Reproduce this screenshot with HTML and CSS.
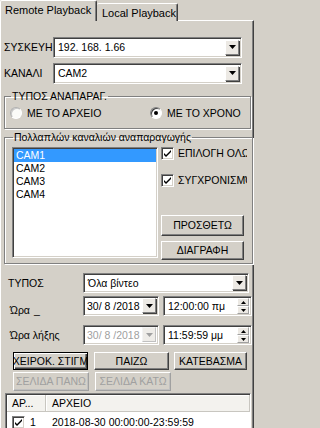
FILE: index.html
```html
<!DOCTYPE html>
<html>
<head>
<meta charset="utf-8">
<link rel="stylesheet" href="styles.css">
</head>
<body>
<div class="tabs">
  <div class="tab tab-active">Remote Playback</div>
  <div class="tab tab-idle">Local Playback</div>
</div>
<div class="panel">
  <div class="field-row">
    <span class="lbl lbl-top">ΣΥΣΚΕΥΗ</span>
    <div class="combo combo-top"><span class="val">192. 168. 1.66</span><span class="drop"><svg width="7" height="4" viewBox="0 0 7 4"><path d="M0 0h7L3.5 4z" fill="#000"/></svg></span></div>
  </div>
  <div class="field-row row-gap">
    <span class="lbl lbl-top">ΚΑΝΑΛΙ</span>
    <div class="combo combo-top"><span class="val">CAM2</span><span class="drop"><svg width="7" height="4" viewBox="0 0 7 4"><path d="M0 0h7L3.5 4z" fill="#000"/></svg></span></div>
  </div>

  <fieldset class="group group-type">
    <legend>ΤΥΠΟΣ ΑΝΑΠΑΡΑΓ.</legend>
    <div class="radio-row">
      <label class="radio radio-a"><span class="rb"></span>ΜΕ ΤΟ ΑΡΧΕΙΟ</label>
      <label class="radio radio-b"><span class="rb rb-on"><span class="dot"></span></span>ΜΕ ΤΟ ΧΡΟΝΟ</label>
    </div>
  </fieldset>

  <fieldset class="group group-multi">
    <legend>Πολλαπλών καναλιών αναπαραγωγής</legend>
    <div class="multi">
      <div class="listbox">
        <div class="item item-sel">CAM1</div>
        <div class="item">CAM2</div>
        <div class="item">CAM3</div>
        <div class="item">CAM4</div>
      </div>
      <div class="side">
        <div class="check check-1"><span class="cb"><svg width="9" height="9" viewBox="0 0 9 9"><path d="M1 4l2 2 5-5v2l-5 5-2-2z" fill="#000"/></svg></span><span class="clip">ΕΠΙΛΟΓΗ ΟΛΩΝ</span></div>
        <div class="check check-2"><span class="cb"><svg width="9" height="9" viewBox="0 0 9 9"><path d="M1 4l2 2 5-5v2l-5 5-2-2z" fill="#000"/></svg></span><span class="clip">ΣΥΓΧΡΟΝΙΣΜΌΣ</span></div>
        <div class="btn btn-side btn-add">ΠΡΟΣΘΕΤΩ</div>
        <div class="btn btn-side btn-del">ΔΙΑΓΡΑΦΗ</div>
      </div>
    </div>
  </fieldset>

  <div class="form">
    <div class="form-row form-type">
      <span class="lbl lbl-form">ΤΥΠΟΣ</span>
      <div class="combo combo-type"><span class="val">Όλα βίντεο</span><span class="drop"><svg width="7" height="4" viewBox="0 0 7 4"><path d="M0 0h7L3.5 4z" fill="#000"/></svg></span></div>
    </div>
    <div class="form-row form-time">
      <span class="lbl lbl-form lbl-start">Ώρα<span class="under">_</span></span>
      <div class="combo date"><span class="val">30/ 8 /2018</span><span class="drop"><svg width="7" height="4" viewBox="0 0 7 4"><path d="M0 0h7L3.5 4z" fill="#000"/></svg></span></div>
      <div class="combo time"><span class="val">12:00:00 πμ</span><span class="spin"><span class="spin-btn"><svg width="5" height="3" viewBox="0 0 5 3"><path d="M0 3h5L2.5 0z" fill="#000"/></svg></span><span class="spin-btn"><svg width="5" height="3" viewBox="0 0 5 3"><path d="M0 0h5L2.5 3z" fill="#000"/></svg></span></span></div>
    </div>
    <div class="form-row form-time form-end">
      <span class="lbl lbl-form lbl-end">Ώρα λήξης</span>
      <div class="combo date date-off"><span class="val">30/ 8 /2018</span><span class="drop"><svg width="7" height="4" viewBox="0 0 7 4"><path d="M0 0h7L3.5 4z" fill="#a0a0a0"/></svg></span></div>
      <div class="combo time"><span class="val">11:59:59 μμ</span><span class="spin"><span class="spin-btn"><svg width="5" height="3" viewBox="0 0 5 3"><path d="M0 3h5L2.5 0z" fill="#000"/></svg></span><span class="spin-btn"><svg width="5" height="3" viewBox="0 0 5 3"><path d="M0 0h5L2.5 3z" fill="#000"/></svg></span></span></div>
    </div>
  </div>

  <div class="btn-row btn-row-1">
    <div class="btn btn-act btn-default"><span class="nowrap">ΧΕΙΡΟΚ. ΣΤΙΓΜ</span></div>
    <div class="btn btn-act">ΠΑΙΖΩ</div>
    <div class="btn btn-act btn-down">ΚΑΤΕΒΑΣΜΑ</div>
  </div>
  <div class="btn-row btn-row-2">
    <div class="btn btn-act btn-off">ΣΕΛΙΔΑ ΠΑΝΩ</div>
    <div class="btn btn-act btn-off">ΣΕΛΙΔΑ ΚΑΤΩ</div>
  </div>

  <div class="listview">
    <div class="lv-head">
      <div class="lv-col lv-col-1">ΑΡ...</div>
      <div class="lv-col lv-col-2">ΑΡΧΕΙΟ</div>
    </div>
    <div class="lv-row">
      <span class="cb cb-lv"><svg width="9" height="9" viewBox="0 0 9 9"><path d="M1 4l2 2 5-5v2l-5 5-2-2z" fill="#000"/></svg></span>
      <span class="lv-num">1</span>
      <span class="lv-file">2018-08-30 00:00:00-23:59:59</span>
    </div>
  </div>
</div>
</body>
</html>
```
FILE: styles.css
```css
* { box-sizing: border-box; }
html { background: #d4d0c8; }
html, body { margin: 0; padding: 0; }
body {
  background: #d4d0c8;
  font: 10.5px/13px "Liberation Sans", Arial, sans-serif;
  color: #000;
  width: 258px;
  height: 428px;
  overflow: hidden;
}

/* tabs */
.tabs {
  display: flex;
  align-items: flex-end;
  height: 21px;
  margin-bottom: -1px;
  position: relative;
  z-index: 1;
}
.tab {
  background: #d4d0c8;
  border-top: 1px solid #fff;
  border-left: 1px solid #fff;
  border-right: 1px solid #404040;
  box-shadow: inset -1px 0 0 #808080;
  border-radius: 2px 2px 0 0;
  white-space: nowrap;
}
.tab-active {
  width: 97px;
  height: 21px;
  padding: 3px 0 0 4px;
  font-size: 11px;
}
.tab-idle {
  width: 81px;
  height: 18px;
  padding: 3px 0 0 5px;
  border-left: none;
  font-size: 11px;
}

/* panel */
.panel {
  width: 254px;
  height: 408px;
  border-top: 1px solid #fff;
  border-left: 1px solid #fff;
  border-right: 1px solid #404040;
  box-shadow: inset -1px 0 0 #808080;
  padding: 16px 0 0 3px;
}

.field-row { display: flex; align-items: center; height: 21px; }
.row-gap { margin-top: 5px; }
.lbl { white-space: nowrap; }
.lbl-top { width: 49px; }

/* combos */
.combo {
  display: flex;
  align-items: center;
  background: #fff;
  border: 1px solid;
  border-color: #808080 #fff #fff #808080;
  box-shadow: inset 1px 1px 0 #404040, inset -1px -1px 0 #d4d0c8;
  height: 21px;
  overflow: hidden;
}
.combo .val { flex: 1; padding-left: 4px; white-space: nowrap; }
.combo-top { width: 189px; }
.drop {
  width: 14px;
  height: 15px;
  margin-right: 2px;
  display: flex;
  align-items: center;
  justify-content: center;
  background: #ece9e4;
  border: 1px solid;
  border-color: #fff #808080 #808080 #fff;
  box-shadow: 1px 1px 0 #404040;
  margin-bottom: 1px;
}

/* groups */
.group {
  margin: 6px 0 0 0;
  width: 247px;
  border: 1px solid #808080;
  box-shadow: inset 1px 1px 0 #fff, 1px 1px 0 #fff;
  padding: 2px 5px 7px 5px;
}
.group legend { padding: 0 1px; margin-left: 1px; }
.radio-row { display: flex; height: 16px; align-items: center; }
.radio { display: flex; align-items: center; white-space: nowrap; }
.radio-a { width: 140px; }
.rb {
  width: 12px;
  height: 12px;
  border-radius: 50%;
  background: #fff;
  border: 1px solid;
  border-color: #808080 #fff #fff #808080;
  box-shadow: inset 1px 1px 0 #404040;
  margin-right: 5px;
  display: flex;
  align-items: center;
  justify-content: center;
}
.radio-a .rb { background: #fbfbf8; box-shadow: inset 1px 1px 0 #c8c8c8; border-color: #b0b0b0 #fff #fff #b0b0b0; }
.dot { width: 4px; height: 4px; border-radius: 50%; background: #000; }

.group-multi { margin-top: 2px; padding: 3px 5px 3px 7px; }
.multi { display: flex; }
.listbox {
  width: 146px;
  height: 111px;
  background: #fff;
  border: 1px solid;
  border-color: #808080 #fff #fff #808080;
  box-shadow: inset 1px 1px 0 #404040, inset -1px -1px 0 #d4d0c8;
  padding: 1px 1px 1px 1px;
}
.item { height: 13px; padding-left: 2px; line-height: 13px; }
.item-sel { background: #3399ff; color: #fff; }
.side { width: 86px; margin-left: 3px; display: flex; flex-direction: column; }
.check { display: flex; align-items: center; height: 13px; white-space: nowrap; overflow: hidden; }
.check-2 { margin-top: 14px; }
.clip { margin-left: 4px; }
.cb {
  flex: none;
  width: 13px;
  height: 13px;
  background: #fff;
  border: 1px solid;
  border-color: #808080 #fff #fff #808080;
  box-shadow: inset 1px 1px 0 #404040, inset -1px -1px 0 #d4d0c8;
  display: flex;
  align-items: center;
  justify-content: center;
}

/* buttons */
.btn {
  display: flex;
  align-items: center;
  justify-content: center;
  background: #d4d0c8;
  border: 1px solid;
  border-color: #fff #404040 #404040 #fff;
  box-shadow: inset -1px -1px 0 #808080;
  white-space: nowrap;
  overflow: hidden;
}
.btn-side { width: 83px; height: 21px; }
.btn-add { margin-top: 28px; }
.btn-del { margin-top: 5px; height: 19px; }

/* form */
.form { padding-left: 4px; margin-top: 9px; }
.form-row { display: flex; align-items: center; }
.lbl-form { width: 75px; }
.combo-type { width: 166px; height: 20px; }
.form-time { margin-top: 2px; }
.form-end { margin-top: 8px; }
.lbl-start, .lbl-end { padding-left: 2px; }
.under { display: inline-block; margin-left: 4px; padding-top: 9px; }
.date { width: 76px; height: 20px; }
.date .val { padding-left: 3px; }
.date-off { background: #fff; color: #a0a0a0; }
.date-off .drop { background: #eeece8; border-color: #f4f4f4 #c0c0c0 #c0c0c0 #f4f4f4; box-shadow: none; }
.time { width: 89px; height: 20px; margin-left: 4px; }
.spin { display: flex; flex-direction: column; width: 12px; margin-right: 2px; }
.spin-btn {
  height: 8px;
  display: flex;
  align-items: center;
  justify-content: center;
  background: #ece9e4;
  border: 1px solid;
  border-color: #fff #a0a0a0 #a0a0a0 #fff;
}

/* action buttons */
.btn-row { display: flex; padding-left: 9px; }
.btn-row-1 { margin-top: 7px; }
.btn-row-2 { margin-top: 2px; }
.btn-act { width: 76px; height: 18px; margin-right: 6px; }
.btn-row-2 .btn-act { height: 19px; }
.btn-default { border: 1px solid #000; box-shadow: inset 1px 1px 0 #fff, inset -1px -1px 0 #404040, inset -2px -2px 0 #808080; }
.btn-down { width: 74px; margin-left: -1px; }
.btn-off { color: #a0a0a0; border-color: #fff #a0a0a0 #a0a0a0 #fff; box-shadow: inset -1px -1px 0 #c0c0c0; }

/* list view */
.listview {
  margin: 2px 0 0 1px;
  width: 246px;
  height: 60px;
  background: #fff;
  border: 1px solid;
  border-color: #808080 #fff #fff #808080;
  box-shadow: inset 1px 1px 0 #404040;
  padding: 1px 0 0 1px;
}
.lv-head { display: flex; height: 17px; }
.lv-col {
  display: flex;
  align-items: center;
  background: #f3f2ee;
  border-right: 1px solid #c8c6c0;
  border-bottom: 1px solid #c8c6c0;
  box-shadow: inset 1px 1px 0 #fff;
}
.lv-col-1 { width: 39px; padding-left: 5px; }
.lv-col-2 { flex: 1; padding-left: 6px; }
.lv-row { display: flex; align-items: center; height: 18px; padding-left: 5px; margin-top: 1px; }
.cb-lv { margin-right: 5px; }
.lv-num { width: 22px; }
```
